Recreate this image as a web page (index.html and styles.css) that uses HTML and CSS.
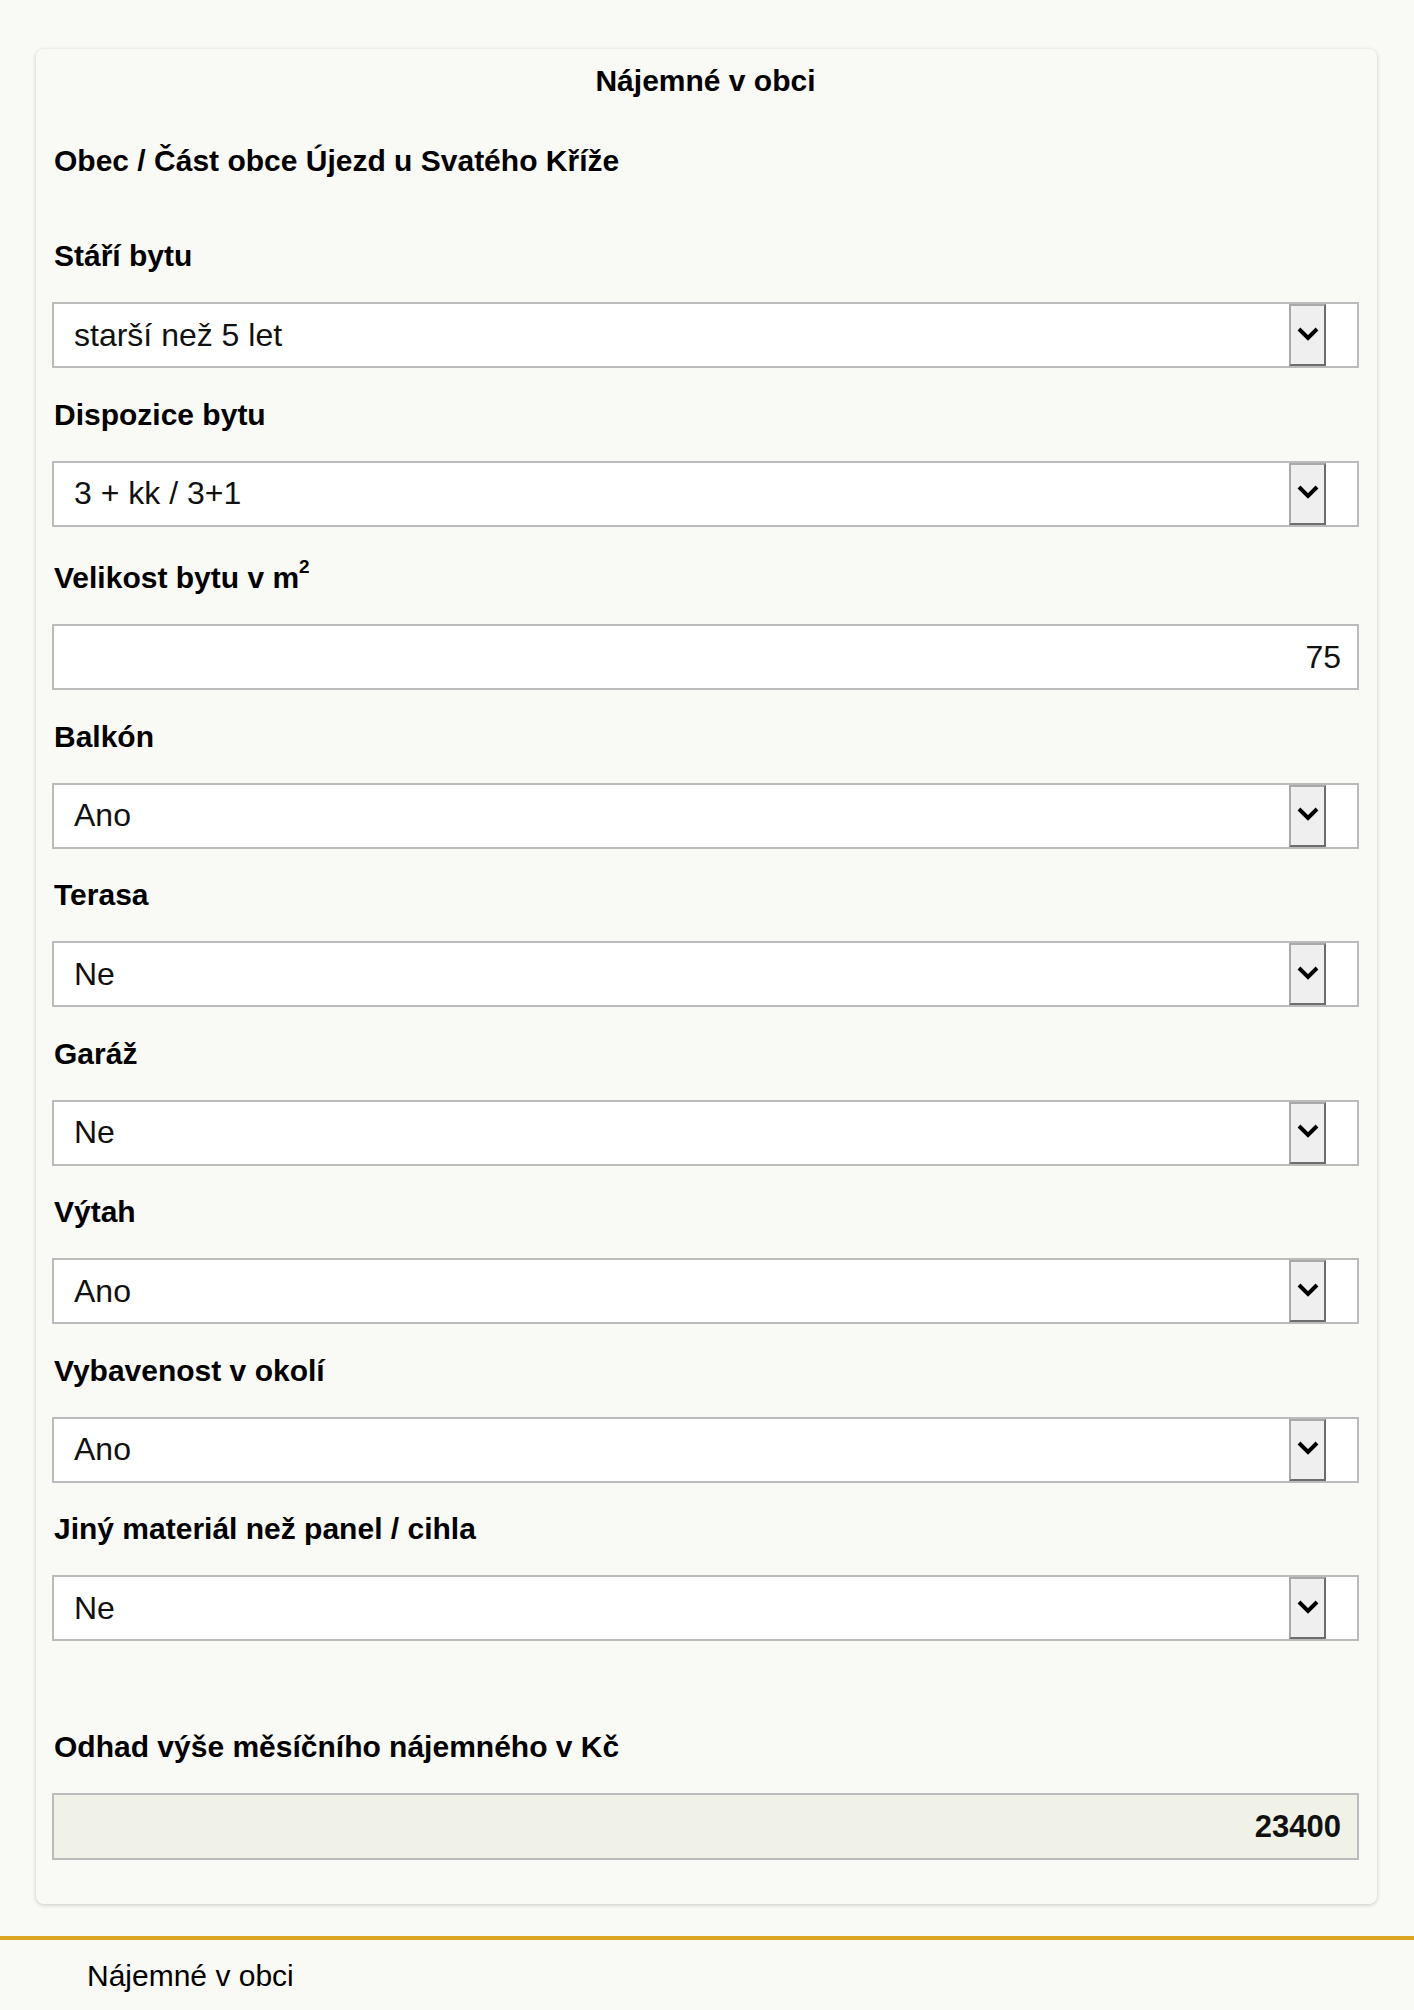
FILE: index.html
```html
<!DOCTYPE html>
<html lang="cs">
<head>
    <meta charset="UTF-8">
    <meta name="viewport" content="width=device-width, initial-scale=1.0">
    <title>Nájemné v obci</title>
    <link rel="stylesheet" href="styles.css">
</head>
<body>

    <div class="calc-card">
        <h2 class="calc-title">Nájemné v obci</h2>
        <p class="calc-place">Obec / Část obce Újezd u Svatého Kříže</p>

        <div class="field">
            <label class="field-label">Stáří bytu</label>
            <div class="select-box">
                <span class="select-value">starší než 5 let</span>
                <span class="select-btn"><svg width="22" height="16" viewBox="0 0 22 16"><path d="M2 3 L11 12 L20 3" /></svg></span>
            </div>
        </div>

        <div class="field">
            <label class="field-label">Dispozice bytu</label>
            <div class="select-box">
                <span class="select-value">3 + kk / 3+1</span>
                <span class="select-btn"><svg width="22" height="16" viewBox="0 0 22 16"><path d="M2 3 L11 12 L20 3" /></svg></span>
            </div>
        </div>

        <div class="field">
            <label class="field-label has-sup">Velikost bytu v m<sup>2</sup></label>
            <div class="text-box">75</div>
        </div>

        <div class="field">
            <label class="field-label">Balkón</label>
            <div class="select-box">
                <span class="select-value">Ano</span>
                <span class="select-btn"><svg width="22" height="16" viewBox="0 0 22 16"><path d="M2 3 L11 12 L20 3" /></svg></span>
            </div>
        </div>

        <div class="field">
            <label class="field-label">Terasa</label>
            <div class="select-box">
                <span class="select-value">Ne</span>
                <span class="select-btn"><svg width="22" height="16" viewBox="0 0 22 16"><path d="M2 3 L11 12 L20 3" /></svg></span>
            </div>
        </div>

        <div class="field">
            <label class="field-label">Garáž</label>
            <div class="select-box">
                <span class="select-value">Ne</span>
                <span class="select-btn"><svg width="22" height="16" viewBox="0 0 22 16"><path d="M2 3 L11 12 L20 3" /></svg></span>
            </div>
        </div>

        <div class="field">
            <label class="field-label">Výtah</label>
            <div class="select-box">
                <span class="select-value">Ano</span>
                <span class="select-btn"><svg width="22" height="16" viewBox="0 0 22 16"><path d="M2 3 L11 12 L20 3" /></svg></span>
            </div>
        </div>

        <div class="field">
            <label class="field-label">Vybavenost v okolí</label>
            <div class="select-box">
                <span class="select-value">Ano</span>
                <span class="select-btn"><svg width="22" height="16" viewBox="0 0 22 16"><path d="M2 3 L11 12 L20 3" /></svg></span>
            </div>
        </div>

        <div class="field">
            <label class="field-label">Jiný materiál než panel / cihla</label>
            <div class="select-box">
                <span class="select-value">Ne</span>
                <span class="select-btn"><svg width="22" height="16" viewBox="0 0 22 16"><path d="M2 3 L11 12 L20 3" /></svg></span>
            </div>
        </div>

        <div class="field result">
            <label class="field-label">Odhad výše měsíčního nájemného v Kč</label>
            <div class="text-box result-box">23400</div>
        </div>
    </div>

    <div class="footer">
        <p>Nájemné v obci</p>
    </div>

</body>
</html>
```

FILE: styles.css
```css
body {
    margin: 0;
    font-family: "Liberation Sans", Arial, sans-serif;
    background-color: var(--bg-color);
    color: #000;
}
:root {
    --bg-color: #f9f9f5;
    --box-border: #bbbbbb;
}
.calc-card {
    margin: 49px 37px 0 36px;
    padding: 14px 18px 15.5px 16px;
    background-color: var(--bg-color);
    border-radius: 8px;
    box-shadow: 0 1px 4px rgba(0, 0, 0, 0.2);
}
.calc-title {
    margin: 0;
    font-size: 30px;
    line-height: 35px;
    text-align: center;
}
.calc-place {
    margin: 45px 0 60px;
    padding-left: 2px;
    font-size: 30px;
    line-height: 35px;
    font-weight: bold;
}
.field {
    display: flex;
    flex-direction: column;
    gap: 29px;
    margin-bottom: 28.5px;
}
/* margins collapse with the field above, so this is the full gap */
.field.result {
    margin-top: 88px;
}
.field-label {
    display: block;
    padding-left: 2px;
    font-size: 30px;
    line-height: 35px;
    font-weight: bold;
}
.field-label.has-sup {
    padding-top: 5px;
}
.field-label sup {
    font-size: 19px;
    line-height: 0;
    vertical-align: 15px;
}
.select-box {
    display: flex;
    align-items: stretch;
    height: 66px;
    box-sizing: border-box;
    border: 2px solid var(--box-border);
    background-color: #fff;
    padding-right: 31px;
}
.select-value {
    flex: 1;
    display: flex;
    align-items: center;
    padding-left: 20px;
    font-size: 32px;
    color: #111;
}
.select-btn {
    width: 37px;
    flex-shrink: 0;
    box-sizing: border-box;
    display: flex;
    align-items: center;
    justify-content: center;
    background-color: #efefef;
    border: 2px solid;
    border-color: #a9a9a9 #6d6d6d #6d6d6d #a9a9a9;
    padding-bottom: 3px;
}
.select-btn svg {
    flex-shrink: 0;
}
.select-btn path {
    fill: none;
    stroke: #000;
    stroke-width: 4;
}
.text-box {
    display: flex;
    align-items: center;
    justify-content: flex-end;
    height: 66px;
    box-sizing: border-box;
    border: 2px solid var(--box-border);
    background-color: #fff;
    padding: 0 16px 0 20px;
    font-size: 32px;
    color: #111;
}
.result-box {
    height: 67px;
    background-color: #f1f2e7;
    font-size: 31px;
    font-weight: bold;
}
.footer {
    margin-top: 32px;
    border-top: 4px solid #daa520;
    padding: 17.5px 87px 20px;
}
.footer p {
    margin: 0;
    font-size: 30px;
    line-height: 35px;
}
```
